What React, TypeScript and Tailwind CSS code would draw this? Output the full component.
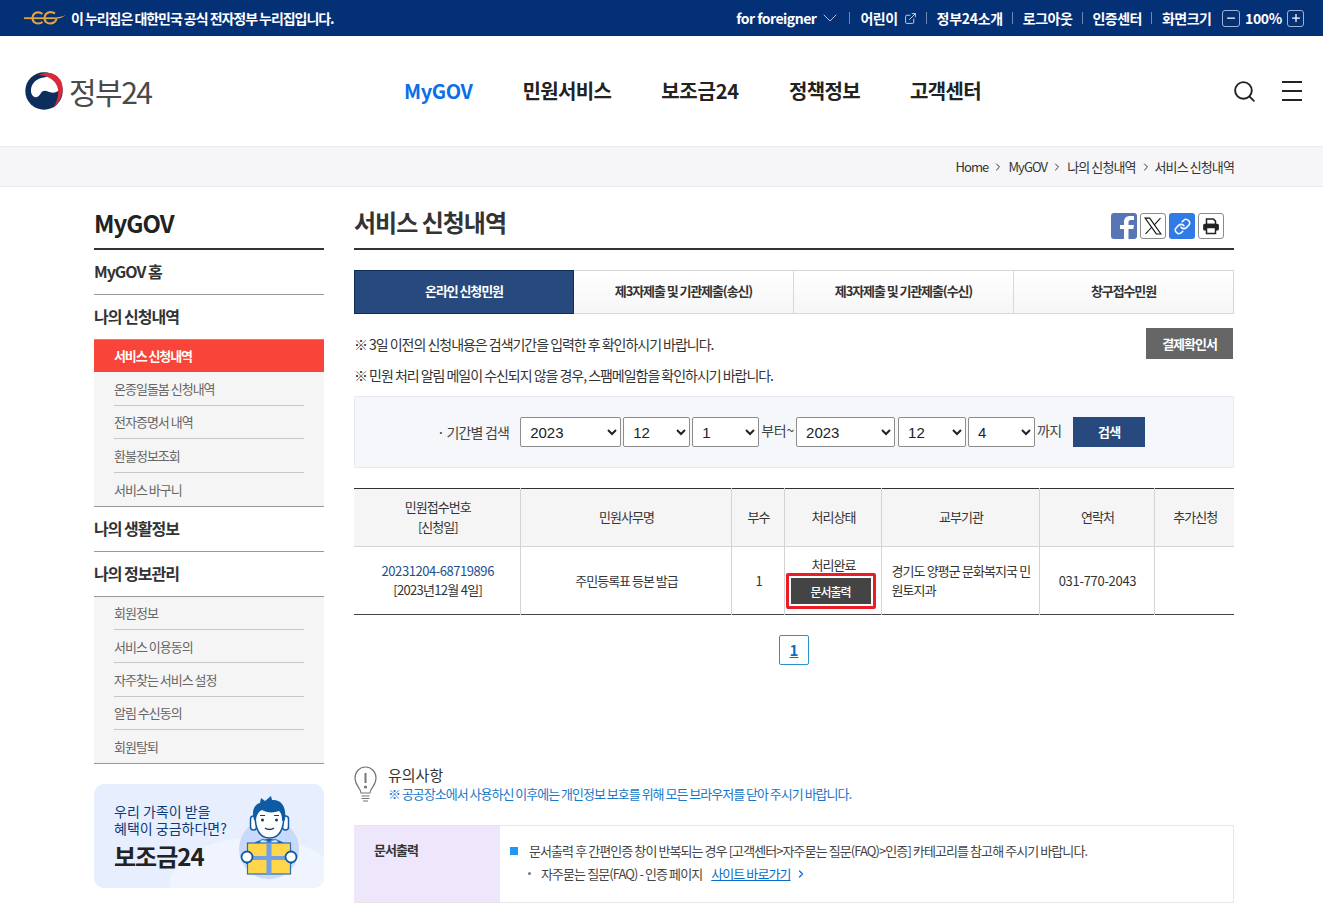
import { ChevronDown, ChevronRight, ExternalLink, Link, Minus, Plus, Search } from "lucide-react";

const KR = "font-['Noto_Sans_CJK_KR','Noto_Sans',sans-serif]";

const Sep = () => <span className="w-px h-3 bg-[#6f88b3]" />;

const TopBar = () => (
  <div className="h-9 bg-[#043076] text-white flex items-center justify-between pl-6 pr-[19px]">
    <div className="flex items-center gap-[5px]">
      <svg width="42" height="14" viewBox="0 0 42 14" fill="none">
        <path d="M0 7.200h30" stroke="#e2a43c" strokeWidth="1.800" />
        <path d="M18.500 3C16 .8 12 .8 10 3c-2 2.200-2 6 0 8 2 2 6 2 8.500 0" stroke="#e2a43c" strokeWidth="2.200" />
        <path d="M31 2.500C28 .5 24 .8 22 3c-2 2.200-2 6 0 8 2.500 2.200 7.500 2 9.500-1 .6-1 .8-2 .8-2.800" stroke="#e2a43c" strokeWidth="2.200" />
        <path d="M30 6.400c5 0 8.500-.8 12-2.600-2.500 2.300-6 4-12 4.200Z" fill="#e2a43c" />
      </svg>
      <span className="text-[14px] font-bold tracking-[-1.050px]">이 누리집은 대한민국 공식 전자정부 누리집입니다.</span>
    </div>
    <div className="flex items-center gap-[9.500px] text-[14px] font-bold tracking-[-0.500px]">
      <span className="flex items-center gap-[2px]">for foreigner <ChevronDown className="w-6 h-6 -mr-[3px] text-[#c6d2e6]" strokeWidth={0.900} /></span>
      <Sep />
      <span className="flex items-center gap-[6px] ml-[1px]">어린이 <ExternalLink className="w-[13px] h-[13px] text-[#dfe6f2]" strokeWidth={1.600} /></span>
      <Sep />
      <span className="tracking-[-0.300px]">정부24소개</span>
      <Sep />
      <span>로그아웃</span>
      <Sep />
      <span>인증센터</span>
      <Sep />
      <span>화면크기</span>
      <span className="flex items-center gap-[5px] ml-[1px] tracking-[-0.300px]">
        <span className="w-[18px] h-[17px] border border-[#9fb2d1] rounded-[3px] flex items-center justify-center"><Minus className="w-3 h-3" strokeWidth={2.500} /></span>
        <span>100%</span>
        <span className="w-[17px] h-[17px] border border-[#9fb2d1] rounded-[3px] flex items-center justify-center"><Plus className="w-3 h-3" strokeWidth={2.500} /></span>
      </span>
    </div>
  </div>
);

const Emblem = () => (
  <svg width="38" height="38" viewBox="0 0 38 38">
    <circle cx="19" cy="19" r="18.700" fill="#0b2e5c" />
    <path d="M7 13.500C9 9 14 6 19 5.500L24 4c6 2 10 8 9.500 14.500-3 3-7.500 2.500-10.500 1-3-1.500-5.500-1-7 1.500-2 4-5.500 5.500-8 3-2.500-2.500-2.500-7-1-10.500Z" fill="#fff" />
    <path d="M13 3.500C21-1.500 32 .5 36.500 10c3.500 10-1.500 20-8 26 3.500-7 6.500-15 3.500-22C29 7 20 2.500 13 3.500Z" fill="#d8283a" />
  </svg>
);

const Header = () => (
  <div className="h-[110px] flex items-center pl-[25px] pr-[21px]">
    <div className="flex items-center gap-[6px] w-[379px]">
      <Emblem />
      <span className="text-[30px] text-[#4a4a4a] tracking-[-1.500px] leading-none">정부24</span>
    </div>
    <nav className="flex items-center gap-[50px] text-[20px] font-bold text-[#222] tracking-[-0.650px]">
      <span className="text-[#0b6fe8] tracking-[-0.400px]">MyGOV</span>
      <span>민원서비스</span>
      <span className="tracking-[-0.200px]">보조금24</span>
      <span>정책정보</span>
      <span>고객센터</span>
    </nav>
    <div className="ml-auto flex items-center gap-[25px]">
      <Search className="w-[25px] h-[25px] text-[#222]" strokeWidth={1.800} />
      <div className="w-5 flex flex-col gap-[7px]">
        <span className="h-[2px] bg-[#222]" />
        <span className="h-[2px] bg-[#222]" />
        <span className="h-[2px] bg-[#222]" />
      </div>
    </div>
  </div>
);

const Crumbs = () => (
  <div className="h-[41px] bg-[#f6f6f8] border-y border-[#eaeaee] flex items-center justify-end pr-[89px] text-[13px] text-[#333] tracking-[-0.900px] gap-1">
    <span>Home</span>
    <ChevronRight className="w-3 h-3" />
    <span>MyGOV</span>
    <ChevronRight className="w-3 h-3" />
    <span>나의 신청내역</span>
    <ChevronRight className="w-3 h-3 -mr-[1px]" />
    <span>서비스 신청내역</span>
  </div>
);

const SideHead = ({ children }: any) => (
  <div className="h-[45px] pb-[2px] flex items-center text-[16px] font-bold text-[#333] tracking-[-1px] border-b border-[#999]">{children}</div>
);

const SideItem = ({ label, last, h }: any) => (
  <div className={`${h || "h-[33.500px]"} flex items-center mx-5 text-[13px] text-[#666] tracking-[-1px] ${last ? "" : "border-b border-[#c8c8c8]"}`}>{label}</div>
);

const Banner = () => (
  <div className="mt-[20px] h-[104px] rounded-[10px] bg-[#e7eefe] relative overflow-hidden pl-5 pt-[19px]">
    <div className="absolute -right-4 top-[54px] w-[170px] h-[90px] rounded-[50%] bg-[#f0f4ff]" />
    <div className="relative text-[14px] leading-[17px] text-[#0d3a78]">
      우리 가족이 받을<br />혜택이 궁금하다면?
    </div>
    <div className="relative mt-[3px] text-[24px] font-bold text-[#222] tracking-[-1px] leading-[32px]">보조금24</div>
    <svg className="absolute left-[144px] top-[12px]" width="62" height="84" viewBox="0 0 62 84">
      <circle cx="31" cy="53" r="30" fill="#c9d9fb" />
      <path d="M8 62c1-14 12-19 23-19s22 5 23 19v6H8Z" fill="#0d5ba3" />
      <rect x="12.500" y="20" width="6" height="14" rx="3" fill="#fff" stroke="#0d5ba3" strokeWidth="1.500" />
      <rect x="44.500" y="20" width="6" height="14" rx="3" fill="#fff" stroke="#0d5ba3" strokeWidth="1.500" />
      <path d="M17 18c0 15 4 24 14.500 24S46 33 46 18c0-7-6-10-14.500-10S17 11 17 18Z" fill="#fff" stroke="#0d5ba3" strokeWidth="1.500" />
      <path d="M16 24C13 14 17 8 22 7l1-5 4 3 6-5 1 4c8-1 15 5 13 20l-3 1c0-6-1-8-3-10-5 2-12 2-17-1-4 2-6 6-6 11Z" fill="#0d5ba3" />
      <circle cx="24.500" cy="24" r="1.500" fill="#173a66" />
      <circle cx="38.500" cy="24" r="1.500" fill="#173a66" />
      <path d="M22 19.500h5M36 19.500h5" stroke="#173a66" strokeWidth="1" />
      <path d="M27 32c2.500 2 6.500 2 9 0" stroke="#173a66" strokeWidth="1.300" fill="none" />
      <path d="M31 47c-5-6-10-3-9 0s6 1 9 0c5-6 10-3 9 0s-6 1-9 0Z" fill="#dfe9fc" stroke="#4f86d4" strokeWidth="1.500" />
      <rect x="9.500" y="47" width="43" height="31" fill="#ffd64a" stroke="#2d6db5" strokeWidth="1.200" />
      <rect x="28.500" y="47" width="5" height="31" fill="#6fa0e3" />
      <rect x="9.500" y="60" width="43" height="4" fill="#6fa0e3" />
      <circle cx="9" cy="61" r="5.500" fill="#fff" stroke="#0d5ba3" strokeWidth="1.800" />
      <circle cx="53" cy="61" r="5.500" fill="#fff" stroke="#0d5ba3" strokeWidth="1.800" />
    </svg>
  </div>
);

const Sidebar = () => (
  <aside className="w-[230px] shrink-0">
    <div className="h-[63px] flex items-end pb-[7px] text-[24px] font-bold text-[#222] tracking-[-1px] border-b-2 border-[#333]">MyGOV</div>
    <SideHead>MyGOV 홈</SideHead>
    <SideHead>나의 신청내역</SideHead>
    <div className="bg-[#f5f5f5] border-b border-[#999]">
      <div className="h-[32px] bg-[#f94439] text-white font-bold text-[13px] tracking-[-1.100px] flex items-center pl-5">서비스 신청내역</div>
      <SideItem label="온종일돌봄 신청내역" />
      <SideItem label="전자증명서 내역" />
      <SideItem label="환불정보조회" />
      <SideItem label="서비스 바구니" last />
    </div>
    <SideHead>나의 생활정보</SideHead>
    <SideHead>나의 정보관리</SideHead>
    <div className="bg-[#f5f5f5] border-b border-[#999]">
      <SideItem label="회원정보" h="h-[33.200px]" />
      <SideItem label="서비스 이용동의" h="h-[33.200px]" />
      <SideItem label="자주찾는 서비스 설정" h="h-[33.200px]" />
      <SideItem label="알림 수신동의" h="h-[33.200px]" />
      <SideItem label="회원탈퇴" h="h-[33px]" last />
    </div>
    <Banner />
  </aside>
);

const Share = () => (
  <div className="flex items-center gap-[3px] mb-[9px] mr-[10px]">
    <span className="w-[26px] h-[26px] rounded-[3px] bg-[#5876b5] flex items-end justify-center overflow-hidden">
      <svg className="ml-[6px]" width="15" height="23" viewBox="0 0 15 23" fill="#fff"><path d="M4 23V13H0V9h4V6c0-4 2.500-6 6-6h4v4h-3c-1.500 0-2.500.6-2.500 2.500V9H14l-.7 4H8.500v10Z" /></svg>
    </span>
    <span className="w-[26px] h-[26px] rounded-[3px] border border-[#8a8a8a] flex items-center justify-center">
      <svg width="20" height="20" viewBox="0 0 24 24" fill="none" stroke="#111" strokeWidth="1.300"><path d="M2.500 2.500h5.500l13.500 19H16Z" /><path d="M21 2.500 13.300 11M10.500 13.500 3 21.500" /></svg>
    </span>
    <span className="w-[26px] h-[26px] rounded-[3px] bg-[#2f7ae5] flex items-center justify-center"><Link className="w-[17px] h-[17px] text-white" strokeWidth={2.200} /></span>
    <span className="w-[26px] h-[26px] rounded-[3px] border border-[#8a8a8a] flex items-center justify-center">
      <svg width="18" height="18" viewBox="0 0 24 24">
        <path d="M6 2.500h9l3 3V10H6Z" fill="#fff" stroke="#222" strokeWidth="2" />
        <rect x="1.500" y="9" width="21" height="9" rx="2" fill="#222" />
        <rect x="6" y="14" width="12" height="8" fill="#fff" stroke="#222" strokeWidth="2" />
      </svg>
    </span>
  </div>
);

const Tabs = () => {
  const tabs = ["제3자제출 및 기관제출(송신)", "제3자제출 및 기관제출(수신)", "창구접수민원"];
  return (
    <div className="mt-[20px] h-[44px] flex text-[13px] font-bold tracking-[-1.100px] text-[#333]">
      <div className="w-[220px] pb-[2px] bg-[#27497d] border border-[#0e2d5c] text-white flex items-center justify-center">온라인 신청민원</div>
      {tabs.map((t) => (
        <div key={t} className="flex-1 pb-[2px] border-y border-r border-[#d8d8d8] bg-gradient-to-b from-white to-[#f6f6f6] flex items-center justify-center">{t}</div>
      ))}
    </div>
  );
};

const Pick = ({ w, value }: any) => (
  <select defaultValue={value} className={`${w} h-[30px] bg-white border border-[#8d8d8d] rounded-[2px] pl-[5px] text-[15px] tracking-normal text-[#222] font-['Liberation_Sans',sans-serif]`}>
    <option>{value}</option>
  </select>
);

const SearchBox = () => (
  <div className="mt-[5px] h-[72px] bg-[#f6f7fa] border border-[#e8e8ee] flex items-center pl-[82px] text-[14px] text-[#444] tracking-[-0.800px]">
    <span className="mr-[11px]">· 기간별 검색</span>
    <div className="flex items-center gap-[2px]">
      <Pick w="w-[101px]" value="2023" />
      <Pick w="w-[67px]" value="12" />
      <Pick w="w-[67px]" value="1" />
      <span className="-mt-[4px] tracking-[-0.200px]">부터~</span>
      <Pick w="w-[99px] mr-[1px]" value="2023" />
      <Pick w="w-[68px]" value="12" />
      <Pick w="w-[67px]" value="4" />
      <span className="-mt-[4px]">까지</span>
    </div>
    <span className="ml-[12px] w-[72px] h-[30px] bg-[#27497d] text-white text-[13px] font-bold flex items-center justify-center">검색</span>
  </div>
);

const Th = ({ children }: any) => (
  <th className="font-normal pb-[2px] pl-[2px] border-r border-[#d4d4d4] last:border-r-0">{children}</th>
);
const Td = ({ children }: any) => (
  <td className="pl-[2px] pb-[1px] border-r border-[#d4d4d4] last:border-r-0 text-center">{children}</td>
);

const ResultTable = () => (
  <table className="mt-5 w-full table-fixed border-t border-b border-t-[#333] border-b-[#444] text-[13px] text-[#333] tracking-[-1px] border-collapse">
    <colgroup>
      <col className="w-[166px]" />
      <col className="w-[211px]" />
      <col className="w-[53px]" />
      <col className="w-[97px]" />
      <col className="w-[158px]" />
      <col className="w-[115px]" />
      <col />
    </colgroup>
    <thead>
      <tr className="h-[58px] bg-[#f5f5f5] border-b border-[#d4d4d4] leading-5">
        <Th>민원접수번호<br />[신청일]</Th>
        <Th>민원사무명</Th>
        <Th>부수</Th>
        <Th>처리상태</Th>
        <Th>교부기관</Th>
        <Th>연락처</Th>
        <Th>추가신청</Th>
      </tr>
    </thead>
    <tbody>
      <tr className="h-[68px] leading-[19px]">
        <Td><span className="text-[#20518f] tracking-[-0.450px]">20231204-68719896</span><br /><span className="tracking-[-0.700px]">[2023년12월 4일]</span></Td>
        <Td>주민등록표 등본 발급</Td>
        <Td>1</Td>
        <td className="border-r border-[#d4d4d4] text-center">
          <div className="leading-[18px] mt-[1px] pl-[2px]">처리완료</div>
          <div className="ml-[1px] w-[90px] h-[36px] -mb-[3px] border-[3px] border-[#ed1c24] rounded-[2px] p-[2px] -mt-[1px]">
            <div className="h-full bg-[#444] text-white text-[12px] font-medium flex items-center justify-center">문서출력</div>
          </div>
        </td>
        <td className="border-r border-[#d4d4d4] pl-[10px] pr-[6px] pb-[1px] text-left break-all tracking-[-0.900px]">경기도 양평군 문화복지국 민원토지과</td>
        <td className="pl-[2px] pb-[1px] border-r border-[#d4d4d4] text-center tracking-[-0.300px]">031-770-2043</td>
        <Td />
      </tr>
    </tbody>
  </table>
);

const Notice = () => (
  <>
    <div className="mt-[101px] flex items-start gap-[11px]">
      <svg width="23" height="36" viewBox="0 0 23 36" fill="none" stroke="#777" strokeWidth="1.200">
        <path d="M7 27c0-5-6-7-6-15C1 6 5.500 1 11.500 1S22 6 22 12c0 8-6 10-6 15Z" />
        <path d="M7.500 30h8M7.500 32.500h8M9 35h5" />
        <path d="M11.500 7v10" strokeWidth="2" />
        <circle cx="11.500" cy="21" r="1" fill="#777" />
      </svg>
      <div className="-mt-[2px]">
        <div className="text-[15px] text-[#333] leading-[21px]">유의사항</div>
        <div className="text-[13px] text-[#1877c9] tracking-[-1px] leading-[18px]">※ 공공장소에서 사용하신 이후에는 개인정보 보호를 위해 모든 브라우저를 닫아 주시기 바랍니다.</div>
      </div>
    </div>
    <div className="mt-[22px] h-[78px] flex border-y border-[#e6e6e6] border-r text-[13px] text-[#444] tracking-[-0.920px]">
      <div className="w-[146px] bg-[#eee6fb] pl-5 pt-[14px] font-bold text-[#333]">문서출력</div>
      <div className="pl-[10px] pt-[13px] leading-[23px]">
        <div className="flex items-center">
          <span className="w-2 h-2 bg-[#2196f3] mr-[11px]" />
          문서출력 후 간편인증 창이 반복되는 경우 [고객센터&gt;자주묻는 질문(FAQ)&gt;인증] 카테고리를 참고해 주시기 바랍니다.
        </div>
        <div className="flex items-center pl-[18px]">
          <span className="w-[3px] h-[3px] rounded-full bg-[#777] mr-[10px]" />
          자주묻는 질문(FAQ) - 인증 페이지
          <span className="ml-[9px] text-[#0b6ec5] underline">사이트 바로가기</span>
          <ChevronRight className="w-3 h-3 ml-1 text-[#0b6ec5]" strokeWidth={2.500} />
        </div>
      </div>
    </div>
  </>
);

export default function App() {
  return (
    <div className={`h-[908px] overflow-hidden bg-white ${KR}`}>
      <TopBar />
      <Header />
      <Crumbs />
      <div className="flex gap-[30px] pl-[94px] pr-[89px]">
        <Sidebar />
        <main className="flex-1 min-w-0">
          <div className="h-[63px] flex items-end justify-between border-b-2 border-[#333]">
            <h1 className="text-[24px] font-bold text-[#333] tracking-[-1px] mb-[8px]">서비스 신청내역</h1>
            <Share />
          </div>
          <Tabs />
          <div className="mt-[14px] flex justify-between items-start text-[14px] text-[#333] tracking-[-1.030px]">
            <div className="leading-[31px] pt-[1px]">
              <div>※ 3일 이전의 신청내용은 검색기간을 입력한 후 확인하시기 바랍니다.</div>
              <div>※ 민원 처리 알림 메일이 수신되지 않을 경우, 스팸메일함을 확인하시기 바랍니다.</div>
            </div>
            <span className="w-[87px] h-[31px] mr-[1px] bg-[#666] text-white text-[13px] font-bold flex items-center justify-center">결제확인서</span>
          </div>
          <SearchBox />
          <ResultTable />
          <div className="mt-5 flex justify-center">
            <span className="w-[30px] h-[30px] border border-[#2b8fd0] rounded-[2px] text-[#0b6ec5] font-bold underline text-[15px] flex items-center justify-center">1</span>
          </div>
          <Notice />
        </main>
      </div>
    </div>
  );
}
